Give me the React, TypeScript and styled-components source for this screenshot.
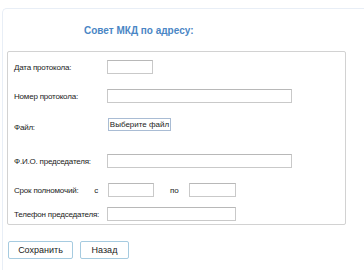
import React from 'react'
import styled, { createGlobalStyle } from 'styled-components'

const GlobalStyle = createGlobalStyle`
  html, body {
    margin: 0;
    padding: 0;
    background: #fff;
    overflow: hidden;
  }
  body {
    font-family: "Liberation Sans", Arial, sans-serif;
    color: #222;
  }
`

const Panel = styled.div`
  margin: 8px 0 0 2px;
  width: calc(100vw - 2px);
  height: calc(100vh - 8px);
  border: 1px solid #e8eef6;
  border-right: none;
  border-bottom: none;
  border-top-left-radius: 5px;
  padding: 0 4px;
  box-sizing: border-box;
`

const Title = styled.div`
  height: 42px;
  display: flex;
  align-items: center;
  padding-left: 77px;
  font-size: 10px;
  font-weight: bold;
  color: #4a86c5;
`

const FormBox = styled.div`
  width: 339px;
  box-sizing: border-box;
  border: 1px solid #d2d2d2;
  border-radius: 2px;
  padding: 8px 0 3px 6px;
`

const Row = styled.div<{ $top?: number }>`
  display: grid;
  grid-template-columns: 93px 1fr;
  align-items: center;
  height: 14px;
  margin-top: ${p => p.$top ?? 0}px;
`

const Label = styled.div<{ $shift?: number }>`
  font-size: 8px;
  letter-spacing: -0.2px;
  white-space: nowrap;
  display: flex;
  justify-content: space-between;
  padding-right: 9px;
  position: relative;
  top: ${p => p.$shift ?? 0}px;
`

const Field = styled.div`
  display: flex;
  align-items: center;
`

const Input = styled.input<{ $w: number }>`
  width: ${p => p.$w}px;
  height: 14px;
  box-sizing: border-box;
  border: 1px solid #c9c9c9;
  border-top-color: #b8b8b8;
  background: #fff;
  padding: 0 2px;
  margin: 0;
  font-size: 8px;
  outline: none;
`

const FileButton = styled.button`
  width: 63px;
  height: 13px;
  margin: 0 0 0 1px;
  padding: 0;
  box-sizing: border-box;
  border: 1px solid #a9bcd4;
  background: #fff;
  font-family: "Liberation Sans", Arial, sans-serif;
  font-size: 8px;
  color: #222;
`

const Sep = styled.span<{ $left: number; $right: number }>`
  font-size: 8px;
  margin: 0 ${p => p.$right}px 0 ${p => p.$left}px;
`

const Actions = styled.div`
  display: flex;
  gap: 7px;
  margin-top: 16px;
  padding-left: 1px;
`

const ActionButton = styled.button<{ $w: number }>`
  width: ${p => p.$w}px;
  height: 18px;
  box-sizing: border-box;
  border: 1px solid #a6cbe0;
  border-radius: 2px;
  background: #fff;
  padding: 0;
  font-family: "Liberation Sans", Arial, sans-serif;
  font-size: 9px;
  color: #222;
`

export default function App() {
  return (
    <>
      <GlobalStyle />
      <Panel>
        <Title>Совет МКД по адресу:</Title>
        <FormBox>
          <Row>
            <Label>Дата протокола:</Label>
            <Field><Input $w={46} /></Field>
          </Row>
          <Row $top={15}>
            <Label>Номер протокола:</Label>
            <Field><Input $w={185} /></Field>
          </Row>
          <Row $top={14}>
            <Label $shift={3}>Файл:</Label>
            <Field><FileButton>Выберите файл</FileButton></Field>
          </Row>
          <Row $top={23}>
            <Label>Ф.И.О. председателя:</Label>
            <Field><Input $w={185} /></Field>
          </Row>
          <Row $top={15}>
            <Label>
              <span>Срок полномочий:</span>
              <span>с</span>
            </Label>
            <Field>
              <Input $w={46} style={{ marginLeft: 1 }} />
              <Sep $left={16} $right={10}>по</Sep>
              <Input $w={47} />
            </Field>
          </Row>
          <Row $top={10}>
            <Label>Телефон председателя:</Label>
            <Field><Input $w={129} /></Field>
          </Row>
        </FormBox>
        <Actions>
          <ActionButton $w={65}>Сохранить</ActionButton>
          <ActionButton $w={49}>Назад</ActionButton>
        </Actions>
      </Panel>
    </>
  )
}
